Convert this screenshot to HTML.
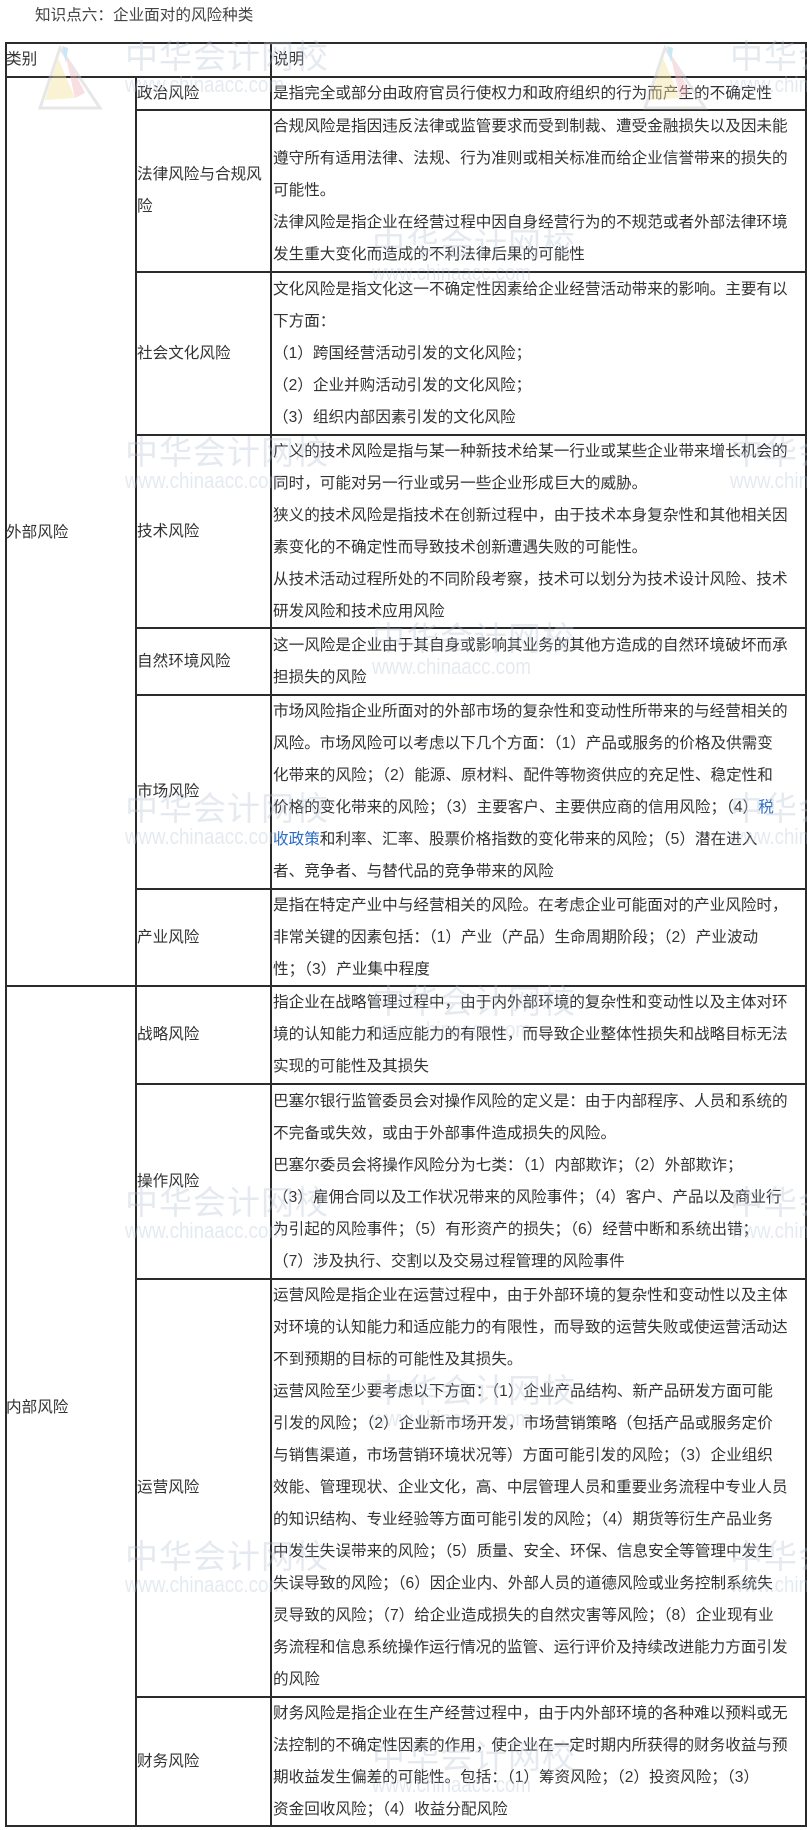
<!DOCTYPE html>
<html><head><meta charset="utf-8">
<style>
*{margin:0;padding:0;box-sizing:border-box}
body{width:807px;height:1830px;background:#fff;position:relative;overflow:hidden;font-family:"Liberation Sans","Noto Sans CJK SC",sans-serif;color:#333}
.h{position:absolute;height:2px;background:#2b2b2b}
.v{position:absolute;width:2px;background:#2b2b2b}
.c{position:absolute;display:flex;flex-direction:column;justify-content:center;font-size:15.6px;line-height:32px;white-space:nowrap;letter-spacing:0}
.c3{left:273px;width:533px}
.c2{left:137px;width:134px}
.t{position:absolute;font-size:15.6px;line-height:20px;white-space:nowrap}
a{color:#2a6bc4;text-decoration:none}
.wm{position:absolute;pointer-events:none;color:rgba(180,195,212,0.35);white-space:nowrap}
.wm .a{font-size:33px;line-height:34px;letter-spacing:1px}
.wm .b{font-size:22px;line-height:22px;transform:scaleX(.85);transform-origin:left}
.lg{position:absolute;pointer-events:none;opacity:.45}
</style></head><body>
<div class="t" style="left:35px;top:6px;color:#444">知识点六：企业面对的风险种类</div>

<div class="h" style="left:5px;width:802px;top:42px"></div>
<div class="h" style="left:5px;width:802px;top:76px"></div>
<div class="h" style="left:136px;width:671px;top:109px"></div>
<div class="h" style="left:136px;width:671px;top:271px"></div>
<div class="h" style="left:136px;width:671px;top:434px"></div>
<div class="h" style="left:136px;width:671px;top:627px"></div>
<div class="h" style="left:136px;width:671px;top:694px"></div>
<div class="h" style="left:136px;width:671px;top:888px"></div>
<div class="h" style="left:5px;width:802px;top:985px"></div>
<div class="h" style="left:136px;width:671px;top:1083px"></div>
<div class="h" style="left:136px;width:671px;top:1278px"></div>
<div class="h" style="left:136px;width:671px;top:1696px"></div>
<div class="h" style="left:5px;width:802px;top:1825px"></div>
<div class="v" style="left:5px;top:42px;height:1785px"></div>
<div class="v" style="left:135px;top:76px;height:1751px"></div>
<div class="v" style="left:270px;top:42px;height:1785px"></div>
<div class="v" style="left:805px;top:42px;height:1785px"></div>

<div class="c" style="left:6px;top:44px;height:32px"><div>类别</div></div>
<div class="c c3" style="top:44px;height:32px"><div>说明</div></div>

<div class="t" style="left:6px;top:523px">外部风险</div>
<div class="t" style="left:6px;top:1398px">内部风险</div>

<div class="c c2" style="top:78px;height:31px"><div>政治风险</div></div>
<div class="c c3" style="top:78px;height:31px"><div>是指完全或部分由政府官员行使权力和政府组织的行为而产生的不确定性</div></div>

<div class="c c2" style="top:111px;height:160px"><div>法律风险与合规风<br>险</div></div>
<div class="c c3" style="top:111px;height:160px"><div>合规风险是指因违反法律或监管要求而受到制裁、遭受金融损失以及因未能<br>遵守所有适用法律、法规、行为准则或相关标准而给企业信誉带来的损失的<br>可能性。<br>法律风险是指企业在经营过程中因自身经营行为的不规范或者外部法律环境<br>发生重大变化而造成的不利法律后果的可能性</div></div>

<div class="c c2" style="top:273px;height:161px"><div>社会文化风险</div></div>
<div class="c c3" style="top:273px;height:161px"><div>文化风险是指文化这一不确定性因素给企业经营活动带来的影响。主要有以<br>下方面：<br>（1）跨国经营活动引发的文化风险；<br>（2）企业并购活动引发的文化风险；<br>（3）组织内部因素引发的文化风险</div></div>

<div class="c c2" style="top:436px;height:191px"><div>技术风险</div></div>
<div class="c c3" style="top:436px;height:191px"><div>广义的技术风险是指与某一种新技术给某一行业或某些企业带来增长机会的<br>同时，可能对另一行业或另一些企业形成巨大的威胁。<br>狭义的技术风险是指技术在创新过程中，由于技术本身复杂性和其他相关因<br>素变化的不确定性而导致技术创新遭遇失败的可能性。<br>从技术活动过程所处的不同阶段考察，技术可以划分为技术设计风险、技术<br>研发风险和技术应用风险</div></div>

<div class="c c2" style="top:629px;height:65px"><div>自然环境风险</div></div>
<div class="c c3" style="top:629px;height:65px"><div>这一风险是企业由于其自身或影响其业务的其他方造成的自然环境破坏而承<br>担损失的风险</div></div>

<div class="c c2" style="top:696px;height:192px"><div>市场风险</div></div>
<div class="c c3" style="top:696px;height:192px"><div>市场风险指企业所面对的外部市场的复杂性和变动性所带来的与经营相关的<br>风险。市场风险可以考虑以下几个方面：（1）产品或服务的价格及供需变<br>化带来的风险；（2）能源、原材料、配件等物资供应的充足性、稳定性和<br>价格的变化带来的风险；（3）主要客户、主要供应商的信用风险；（4）<a>税</a><br><a>收政策</a>和利率、汇率、股票价格指数的变化带来的风险；（5）潜在进入<br>者、竞争者、与替代品的竞争带来的风险</div></div>

<div class="c c2" style="top:890px;height:95px"><div>产业风险</div></div>
<div class="c c3" style="top:890px;height:95px"><div>是指在特定产业中与经营相关的风险。在考虑企业可能面对的产业风险时，<br>非常关键的因素包括：（1）产业（产品）生命周期阶段；（2）产业波动<br>性；（3）产业集中程度</div></div>

<div class="c c2" style="top:987px;height:96px"><div>战略风险</div></div>
<div class="c c3" style="top:987px;height:96px"><div>指企业在战略管理过程中，由于内外部环境的复杂性和变动性以及主体对环<br>境的认知能力和适应能力的有限性，而导致企业整体性损失和战略目标无法<br>实现的可能性及其损失</div></div>

<div class="c c2" style="top:1085px;height:193px"><div>操作风险</div></div>
<div class="c c3" style="top:1085px;height:193px"><div>巴塞尔银行监管委员会对操作风险的定义是：由于内部程序、人员和系统的<br>不完备或失效，或由于外部事件造成损失的风险。<br>巴塞尔委员会将操作风险分为七类：（1）内部欺诈；（2）外部欺诈；<br>（3）雇佣合同以及工作状况带来的风险事件；（4）客户、产品以及商业行<br>为引起的风险事件；（5）有形资产的损失；（6）经营中断和系统出错；<br>（7）涉及执行、交割以及交易过程管理的风险事件</div></div>

<div class="c c2" style="top:1280px;height:416px"><div>运营风险</div></div>
<div class="c c3" style="top:1280px;height:416px"><div>运营风险是指企业在运营过程中，由于外部环境的复杂性和变动性以及主体<br>对环境的认知能力和适应能力的有限性，而导致的运营失败或使运营活动达<br>不到预期的目标的可能性及其损失。<br>运营风险至少要考虑以下方面：（1）企业产品结构、新产品研发方面可能<br>引发的风险；（2）企业新市场开发，市场营销策略（包括产品或服务定价<br>与销售渠道，市场营销环境状况等）方面可能引发的风险；（3）企业组织<br>效能、管理现状、企业文化，高、中层管理人员和重要业务流程中专业人员<br>的知识结构、专业经验等方面可能引发的风险；（4）期货等衍生产品业务<br>中发生失误带来的风险；（5）质量、安全、环保、信息安全等管理中发生<br>失误导致的风险；（6）因企业内、外部人员的道德风险或业务控制系统失<br>灵导致的风险；（7）给企业造成损失的自然灾害等风险；（8）企业现有业<br>务流程和信息系统操作运行情况的监管、运行评价及持续改进能力方面引发<br>的风险</div></div>

<div class="c c2" style="top:1698px;height:127px"><div>财务风险</div></div>
<div class="c c3" style="top:1698px;height:127px"><div>财务风险是指企业在生产经营过程中，由于内外部环境的各种难以预料或无<br>法控制的不确定性因素的作用，使企业在一定时期内所获得的财务收益与预<br>期收益发生偏差的可能性。包括：（1）筹资风险；（2）投资风险；（3）<br>资金回收风险；（4）收益分配风险</div></div>

<svg class="lg" style="left:30px;top:38px" width="90" height="90" viewBox="0 0 90 90"><path d="M30 10 L70 70 L10 70 Z" fill="none" stroke="#ccc" stroke-width="3"/><path d="M28 20 L45 60 L15 62Z" fill="#f3e3a0"/><path d="M35 15 L55 55 L45 60Z" fill="#f2b8c0"/><path d="M32 8 L38 10 L36 25Z" fill="#8ccbe8"/></svg>
<div class="wm" style="left:125px;top:40px"><div class="a">中华会计网校</div><div class="b">www.chinaacc.com</div></div>
<svg class="lg" style="left:635px;top:38px" width="90" height="90" viewBox="0 0 90 90"><path d="M30 10 L70 70 L10 70 Z" fill="none" stroke="#ccc" stroke-width="3"/><path d="M28 20 L45 60 L15 62Z" fill="#f3e3a0"/><path d="M35 15 L55 55 L45 60Z" fill="#f2b8c0"/><path d="M32 8 L38 10 L36 25Z" fill="#8ccbe8"/></svg>
<div class="wm" style="left:730px;top:40px"><div class="a">中华会计网校</div><div class="b">www.chinaacc.com</div></div>

<div class="wm" style="left:372px;top:228px"><div class="a">中华会计网校</div><div class="b">www.chinaacc.com</div></div>
<div class="wm" style="left:125px;top:436px"><div class="a">中华会计网校</div><div class="b">www.chinaacc.com</div></div>
<div class="wm" style="left:730px;top:436px"><div class="a">中华会计网校</div><div class="b">www.chinaacc.com</div></div>
<div class="wm" style="left:372px;top:622px"><div class="a">中华会计网校</div><div class="b">www.chinaacc.com</div></div>
<div class="wm" style="left:125px;top:792px"><div class="a">中华会计网校</div><div class="b">www.chinaacc.com</div></div>
<div class="wm" style="left:730px;top:792px"><div class="a">中华会计网校</div><div class="b">www.chinaacc.com</div></div>
<div class="wm" style="left:372px;top:985px"><div class="a">中华会计网校</div><div class="b">www.chinaacc.com</div></div>
<div class="wm" style="left:125px;top:1186px"><div class="a">中华会计网校</div><div class="b">www.chinaacc.com</div></div>
<div class="wm" style="left:730px;top:1186px"><div class="a">中华会计网校</div><div class="b">www.chinaacc.com</div></div>
<div class="wm" style="left:372px;top:1374px"><div class="a">中华会计网校</div><div class="b">www.chinaacc.com</div></div>
<div class="wm" style="left:125px;top:1540px"><div class="a">中华会计网校</div><div class="b">www.chinaacc.com</div></div>
<div class="wm" style="left:730px;top:1540px"><div class="a">中华会计网校</div><div class="b">www.chinaacc.com</div></div>
<div class="wm" style="left:372px;top:1740px"><div class="a">中华会计网校</div><div class="b">www.chinaacc.com</div></div>
</body></html>
